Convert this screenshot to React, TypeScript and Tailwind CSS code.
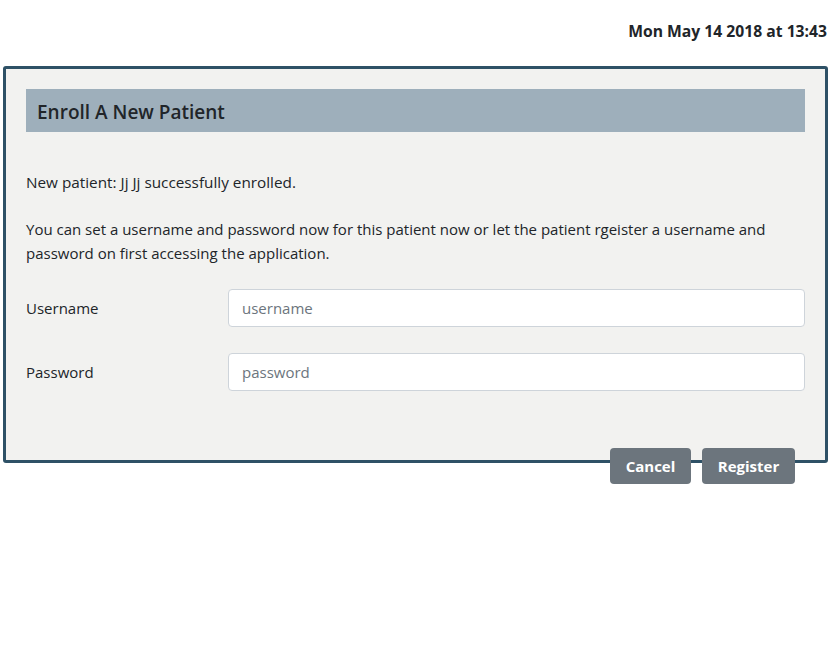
import React from 'react';

const font = { fontFamily: '"Open Sans", "Noto Sans", sans-serif' };

const Field: React.FC<{ label: string; placeholder: string; type?: string }> = ({ label, placeholder, type = 'text' }) => (
  <div className="flex items-center">
    <label className="w-[202px] text-[15px] text-[#212529]">{label}</label>
    <input
      type={type}
      placeholder={placeholder}
      className="flex-1 h-[38px] px-[13px] bg-white border border-[#ced4da] rounded-[4px] text-[15px] text-[#495057] placeholder:text-[#6c757d] outline-none"
    />
  </div>
);

export default function App() {
  return (
    <div className="w-[840px] h-[670px] bg-white" style={font}>
      <div className="flex justify-end pr-[13px] pt-[20px] h-[66px]">
        <span className="text-[15.7px] font-bold text-[#212529] leading-[22px]">Mon May 14 2018 at 13:43</span>
      </div>

      <div className="ml-[3px] w-[825px] h-[397px] border-[3px] border-[#2e5166] rounded-[3px] bg-[#f2f2f0] px-[20px] pt-[20px]">
        <div className="h-[43px] bg-[#9eafbb] flex items-center pl-[11px] pt-[4px]">
          <h2 className="text-[19px] font-semibold text-[#212529]">Enroll A New Patient</h2>
        </div>

        <p className="mt-[38px] text-[15.3px] leading-[24px] text-[#212529]">New patient: Jj Jj successfully enrolled.</p>
        <p className="mt-[23px] text-[15px] leading-[24px] text-[#212529]">
          You can set a username and password now for this patient now or let the patient rgeister a username and password on first accessing the application.
        </p>

        <div className="mt-[24px] flex flex-col gap-[26px]">
          <Field label="Username" placeholder="username" />
          <Field label="Password" placeholder="password" type="password" />
        </div>

        <div className="mt-[57px] flex justify-end gap-[11px] pr-[10px]">
          <button className="w-[81px] h-[36px] rounded-[4px] bg-[#6c757d] text-white font-bold text-[15px]">Cancel</button>
          <button className="w-[93px] h-[36px] rounded-[4px] bg-[#6c757d] text-white font-bold text-[15px]">Register</button>
        </div>
      </div>
    </div>
  );
}
